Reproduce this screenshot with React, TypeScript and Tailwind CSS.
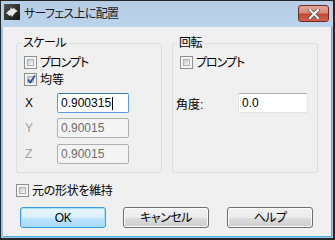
import React from "react";

const F = "font-['Liberation_Sans','Noto_Sans_CJK_JP',sans-serif] [font-feature-settings:'palt']";

function Checkbox({ checked = false }: { checked?: boolean }) {
  return (
    <div className="relative w-[13px] h-[13px] shrink-0 border border-[#8e8f8f] bg-[#f4f4f4] p-[2px]">
      <div className="w-full h-full border border-[#aeb3b9] bg-[linear-gradient(135deg,#c6cad0,#f6f6f6)]" />
      {checked && (
        <svg className="absolute left-[1px] top-[0px]" width="11" height="11" viewBox="0 0 11 11">
          <path d="M2 5.5 L4.3 8.5 L9 1.5" fill="none" stroke="#2a4fa8" strokeWidth="1.8" strokeLinejoin="round" />
        </svg>
      )}
    </div>
  );
}

function Input({ value, disabled = false, focused = false, w }: { value: string; disabled?: boolean; focused?: boolean; w: string }) {
  const cls = disabled
    ? "border-[#afafaf] bg-[#f4f4f4] text-[#6d6d6d]"
    : focused
    ? "border-[#569de5] border-t-[#3d7bad] bg-white text-black"
    : "border-[#e2e3ea] border-t-[#abadb3] bg-white text-black";
  return (
    <div className={`${w} h-[20px] rounded-[2px] border ${cls} flex items-center pl-[3px] text-[12px] leading-none`}>
      <span>{value}</span>
      {focused && <span className="w-px h-[13px] bg-black ml-[1px]" />}
    </div>
  );
}

function Button({ label, def = false }: { label: string; def?: boolean }) {
  const cls = def
    ? "border-[#3c9be0] bg-[linear-gradient(#eaf6fd_0%,#d9f0fc_50%,#bee6fd_50%,#a7d9f5_100%)] shadow-[inset_0_0_0_1px_#9fe2fb]"
    : "border-[#707070] bg-[linear-gradient(#f2f2f2_0%,#ebebeb_50%,#dddddd_50%,#cfcfcf_100%)] shadow-[inset_0_0_0_1px_#fcfcfc]";
  return (
    <div className={`w-[86px] h-[21px] rounded-[3px] border ${cls} flex items-center justify-center text-[12px] text-black leading-none tracking-[-0.5px]`}>
      {label}
    </div>
  );
}

function Group({ title, children }: { title: string; children: React.ReactNode }) {
  return (
    <div className="relative w-[146px] h-[130px] border border-[#d5dfe5] rounded-[3px]">
      <span className="absolute left-[5px] -top-[8px] px-[1px] bg-[#f0f0f0] text-[12px] leading-[14px] text-black tracking-[-0.5px]">{title}</span>
      {children}
    </div>
  );
}

export default function App() {
  return (
    <div className={`${F} w-[335px] h-[240px] flex flex-col border-l border-t border-r-2 border-b-2 border-[#262626] bg-[#9ec3e8]`}>
      <div className="h-[26px] flex items-start bg-[linear-gradient(#b6cde6,#bcd3ec)]">
        <div className="ml-[3px] mt-[3px] w-[16px] h-[16px] bg-[linear-gradient(135deg,#555,#111)] flex items-center justify-center">
          <svg width="14" height="14" viewBox="0 0 14 14">
            <path d="M1 9 L3 6 L5 5 L6 2 L7 4 L9 3 L11 5 L13 6 L11 7 L9 9 L7 12 L6 10 L4 11 L3 9 Z" fill="#e8e8e8" />
          </svg>
        </div>
        <span className="ml-[4px] mt-[6px] text-[12px] leading-[14px] text-[#1a1a1a] tracking-[-0.7px]">サーフェス上に配置</span>
        <div className="ml-auto mr-[4px] mt-[4px] w-[31px] h-[17px] rounded-[3px] border border-[#6e2a22] bg-[linear-gradient(#e4a598_0%,#d88a7a_45%,#c24a32_55%,#d1604a_100%)] flex items-center justify-center">
          <svg width="12" height="10" viewBox="0 0 12 10">
            <path d="M2 1 L10 9 M10 1 L2 9" stroke="#555" strokeWidth="3.6" strokeLinecap="square" />
            <path d="M2 1 L10 9 M10 1 L2 9" stroke="#fff" strokeWidth="2" strokeLinecap="square" />
          </svg>
        </div>
      </div>
      <div className="flex-1 ml-[2px] mr-[1px] mb-[1px] bg-[#f0f0f0] border-r border-b border-[#46b4e4] flex flex-col pt-[16px] px-[13px]">
        <div className="flex gap-[10px]">
          <Group title="スケール">
            <div className="flex flex-col pl-[7px] pt-[12px] text-[12px] text-black">
              <div className="flex items-center gap-[3px] h-[13px]"><Checkbox /><span className="tracking-[-1px]">プロンプト</span></div>
              <div className="flex items-center gap-[3px] h-[13px] mt-[4px]"><Checkbox checked /><span>均等</span></div>
              <div className="flex items-center h-[20px] mt-[7px]">
                <span className="w-[33px] pl-[1px]">X</span>
                <Input value="0.900315" focused w="w-[72px]" />
              </div>
              <div className="flex items-center h-[20px] mt-[5px]">
                <span className="w-[33px] pl-[1px] text-[#a0a0a0]">Y</span>
                <Input value="0.90015" disabled w="w-[72px]" />
              </div>
              <div className="flex items-center h-[20px] mt-[6px]">
                <span className="w-[33px] pl-[1px] text-[#a0a0a0]">Z</span>
                <Input value="0.90015" disabled w="w-[72px]" />
              </div>
            </div>
          </Group>
          <Group title="回転">
            <div className="flex flex-col pl-[7px] pt-[12px] text-[12px] text-black">
              <div className="flex items-center gap-[3px] h-[13px]"><Checkbox /><span className="tracking-[-1px]">プロンプト</span></div>
              <div className="flex items-center h-[20px] mt-[24px] -ml-[4px]">
                <span className="w-[62px] pt-[4px]">角度:</span>
                <Input value="0.0" w="w-[70px]" />
              </div>
            </div>
          </Group>
        </div>
        <div className="flex items-center gap-[3px] h-[13px] mt-[11px] text-[12px] text-black">
          <Checkbox /><span className="tracking-[-0.3px]">元の形状を維持</span>
        </div>
        <div className="flex mt-[10px] pl-[4px]">
          <Button label="OK" def />
          <div className="ml-[17px]"><Button label="キャンセル" /></div>
          <div className="ml-[18px]"><Button label="ヘルプ" /></div>
        </div>
      </div>
    </div>
  );
}
